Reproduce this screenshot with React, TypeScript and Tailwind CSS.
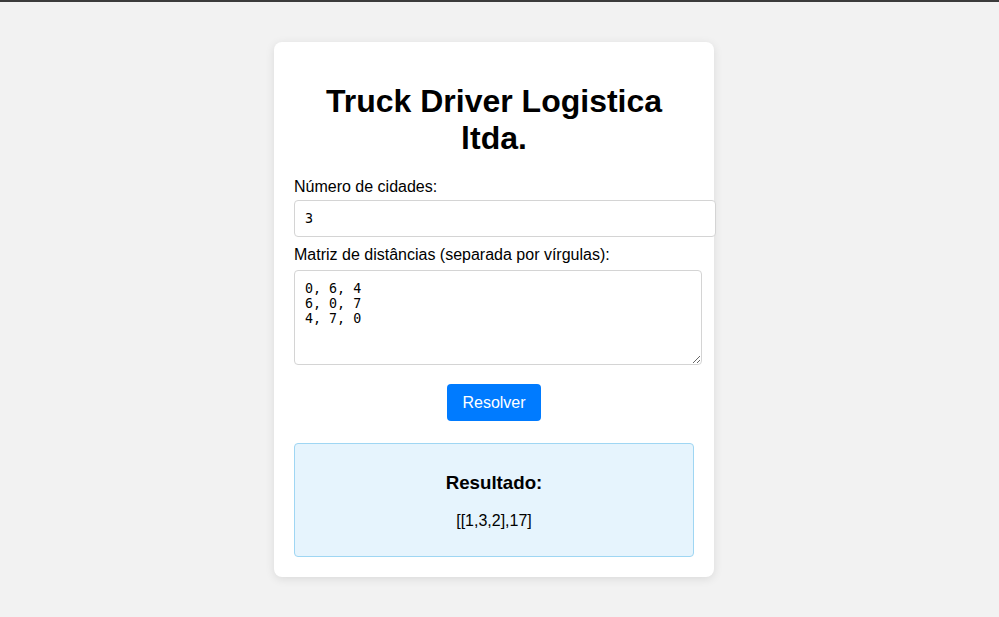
const App = () => {
	return (
		<div className="min-h-screen bg-[#f2f2f2] font-['Liberation_Sans',Arial,sans-serif] text-black">
			<div className="h-[2px] bg-[#3b3b3b]" />
			<div className="pt-[40px] pl-[274px]">
				<div className="w-[440px] bg-white rounded-lg shadow-[0_2px_10px_rgba(0,0,0,0.1)] p-5">
					<h1 className="text-[32px] font-bold text-center leading-[37px] my-[21px]">
						Truck Driver Logistica ltda.
					</h1>
					<form>
						<label className="block text-base leading-[18px]">Número de cidades:</label>
						<input
							className="block mt-1 w-[422px] h-[37px] px-[10px] border border-[#d4d4d4] rounded bg-white font-['DejaVu_Sans_Mono',monospace] text-[13.33px] focus:outline-none"
							type="number"
							defaultValue="3"
						/>
						<label className="block mt-[9px] text-base leading-[18px]">
							Matriz de distâncias (separada por vírgulas):
						</label>
						<textarea
							className="block mt-[6px] w-[408px] h-[95px] p-[10px] border border-[#d4d4d4] rounded bg-white font-['DejaVu_Sans_Mono',monospace] text-[13.33px] leading-[15px] focus:outline-none"
							defaultValue={"0, 6, 4\n6, 0, 7\n4, 7, 0"}
						/>
						<div className="flex justify-center mt-[19px]">
							<button
								type="button"
								className="w-[94px] h-[37px] bg-[#007bff] text-white text-base rounded"
							>
								Resolver
							</button>
						</div>
					</form>
					<div className="mt-[22px] w-[400px] border border-[#9fd6f3] bg-[#e6f4fd] rounded p-[10px] text-center">
						<h3 className="text-[18.72px] font-bold leading-[22px] my-[18px]">Resultado:</h3>
						<p className="text-base leading-[18px] mb-4">[[1,3,2],17]</p>
					</div>
				</div>
			</div>
		</div>
	);
};

export default App;
